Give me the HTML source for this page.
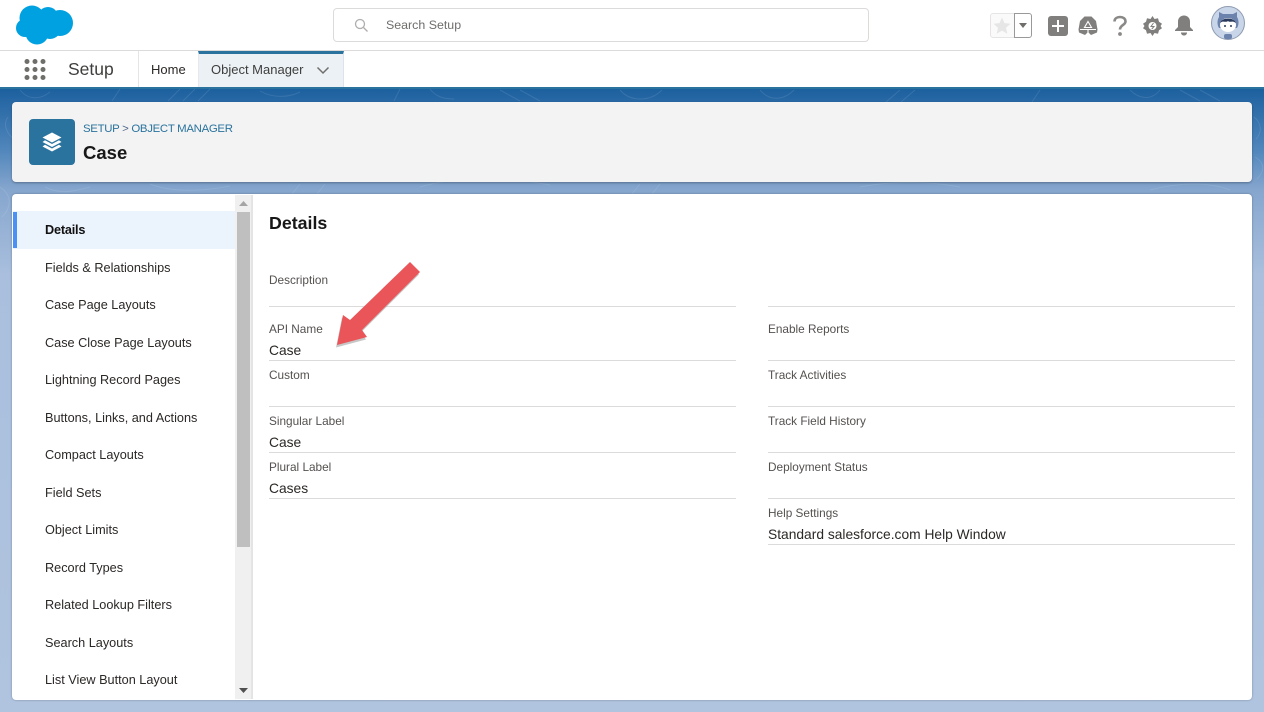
<!DOCTYPE html>
<html><head><meta charset="utf-8"><style>
html,body{margin:0;padding:0;width:1264px;height:712px;overflow:hidden;background:#b0c4df;font-family:"Liberation Sans",sans-serif;color:#181818}
.a{position:absolute;white-space:nowrap}
.nav{font-size:12.7px;left:45px;line-height:16px;color:#2b2826}
.lab{font-size:11.8px;line-height:14px;color:#54514f}
.val{font-size:13.8px;line-height:16px;color:#2b2826}
.ln{position:absolute;height:1px;background:#dddbda;width:467px}
</style></head><body>
<div class="a" style="left:0;top:0;width:1264px;height:50px;background:#fff;border-bottom:1px solid #dddbda"></div>
<svg class="a" style="left:14px;top:3px" width="62" height="44" viewBox="0 0 62 44"><g fill="#00a1e0"><circle cx="18" cy="15" r="12.500"/><circle cx="34" cy="14" r="10"/><circle cx="46" cy="20" r="13"/><circle cx="11" cy="25" r="9"/><circle cx="23" cy="30" r="11.500"/><circle cx="36" cy="25" r="11"/></g></svg>
<div class="a" style="left:333px;top:8px;width:534px;height:32px;background:#fff;border:1px solid #dddbda;border-radius:4px"></div>
<svg class="a" style="left:354px;top:18px" width="15" height="15" viewBox="0 0 15 15" fill="none" stroke="#b0aeac" stroke-width="1.300"><circle cx="6" cy="6" r="4.500"/><path d="M9.500 9.500L13.500 13.500"/></svg>
<div class="a" style="left:386px;top:17px;font-size:12.400px;line-height:17px;color:#6f6e6c">Search Setup</div>
<div class="a" style="left:990px;top:13px;width:24px;height:23px;border:1px solid #e6e5e4;border-radius:3px 0 0 3px;background:#fafafa"></div>
<svg class="a" style="left:993px;top:17px" width="18" height="17" viewBox="0 0 18 17"><path d="M9 0.500l2.500 5.600 6 .6-4.500 4 1.300 6L9 13.600 3.700 16.700l1.300-6-4.500-4 6-.6z" fill="#e6e6e6"/></svg>
<div class="a" style="left:1014px;top:13px;width:16px;height:23px;border:1px solid #9a9997;border-radius:0 3px 3px 0;background:#fff"></div>
<svg class="a" style="left:1019px;top:23px" width="8" height="6"><path d="M0 0h8L4 5z" fill="#706e6b"/></svg>
<svg class="a" style="left:1048px;top:16px" width="20" height="20"><rect width="20" height="20" rx="3" fill="#807f7d"/><path d="M10 4v12M4 10h12" stroke="#fff" stroke-width="2"/></svg>
<svg class="a" style="left:1078px;top:16px" width="20" height="20" viewBox="0 0 20 20"><path d="M6.500 .5h7L18 5l1.500 8.500-.5 3-6 2.500-3-3-3 3-6-2.500-.5-3L2 5z" fill="#807f7d"/><path d="M10 5.500l3.500 6h-7zM2 13.500h16M10 14v3" stroke="#fff" stroke-width="1.100" fill="none"/></svg>
<svg class="a" style="left:1112px;top:15px" width="16" height="22" viewBox="0 0 16 22" fill="none"><path d="M2.500 6.500C2.500 3.500 5 2 8 2s5.500 1.500 5.500 4.500C13.500 10 8 10 8 14.500" stroke="#8a8987" stroke-width="2.600"/><circle cx="8" cy="19" r="1.900" fill="#8a8987"/></svg>
<svg class="a" style="left:1143px;top:16px" width="19" height="20" viewBox="0 0 19 20"><path d="M9.500 0l2 3 3.500-.7 1 3.500 3 2-1.500 2.200 1.500 2.200-3 2-1 3.500-3.500-.7-2 3-2-3-3.500.7-1-3.500-3-2L1.500 10 0 7.800l3-2 1-3.500 3.500.7z" fill="#807f7d"/><circle cx="9.500" cy="10" r="4" fill="#fff"/><path d="M10.500 7L8 10.500h3L8.800 13" stroke="#807f7d" fill="none"/></svg>
<svg class="a" style="left:1174px;top:15px" width="20" height="21" viewBox="0 0 20 21"><path d="M10 0.500c3.500 0 6 2.500 6 6v5.500l3 3v1H1v-1l3-3V6.500c0-3.500 2.500-6 6-6z" fill="#807f7d"/><path d="M7 17.500h6c0 2-1.500 3-3 3s-3-1-3-3z" fill="#807f7d"/></svg>
<svg class="a" style="left:1211px;top:6px" width="34" height="34" viewBox="0 0 34 34"><circle cx="17" cy="17" r="16.500" fill="#c9d5e8" stroke="#8e9bb0"/><path d="M8 11l0-5 4 2h10l4-2 0 5c2 3 2 8 0 11H8c-2-3-2-8 0-11z" fill="#6c83ad"/><ellipse cx="17" cy="19" rx="8" ry="7" fill="#fff"/><path d="M9 17c2-6 14-6 16 0-4-3-6 0-8-2-2 2-5-1-8 2z" fill="#2a3a5e"/><circle cx="14" cy="20" r="1" fill="#2a3a5e"/><circle cx="20" cy="20" r="1" fill="#2a3a5e"/><rect x="13" y="28" width="8" height="5" rx="2" fill="#6c83ad"/></svg>
<div class="a" style="left:0;top:51px;width:1264px;height:36px;background:#fff"></div>
<svg class="a" style="left:24px;top:59px" width="22" height="22" fill="#706e6b"><circle cx="3" cy="2.500" r="2.500"/><circle cx="11" cy="2.500" r="2.500"/><circle cx="19" cy="2.500" r="2.500"/><circle cx="3" cy="10.500" r="2.500"/><circle cx="11" cy="10.500" r="2.500"/><circle cx="19" cy="10.500" r="2.500"/><circle cx="3" cy="18.500" r="2.500"/><circle cx="11" cy="18.500" r="2.500"/><circle cx="19" cy="18.500" r="2.500"/></svg>
<div class="a" style="left:68px;top:58px;font-size:17.500px;line-height:22px;color:#3e3e3c">Setup</div>
<div class="a" style="left:138px;top:51px;width:1px;height:36px;background:#e5e5e5"></div>
<div class="a" style="left:151px;top:61px;font-size:13px;line-height:17px;color:#2b2826">Home</div>
<div class="a" style="left:198px;top:51px;width:146px;height:36px;background:#ecf1f5;box-sizing:border-box;border-top:3px solid #2a739e;border-right:1px solid #dde3e8;border-left:1px solid #e5e8ec"></div>
<div class="a" style="left:211px;top:61px;font-size:13px;line-height:17px;color:#3e3e3c">Object Manager</div>
<svg class="a" style="left:316px;top:66px" width="14" height="9" fill="none"><path d="M1.500 1.500L7 7l5.500-5.500" stroke="#706e6b" stroke-width="1.500"/></svg>
<svg class="a" style="left:0;top:87px" width="1264" height="625" viewBox="0 0 1264 625"><defs><linearGradient id="g" x1="0" y1="0" x2="0" y2="1"><stop offset="0" stop-color="#1b5f9e"/><stop offset=".1" stop-color="#5086bb"/><stop offset=".165" stop-color="#86a6ce"/><stop offset=".3" stop-color="#a9bfdd"/><stop offset="1" stop-color="#b0c4df"/></linearGradient></defs><rect width="1264" height="625" fill="url(#g)"/><rect width="1264" height="2" fill="#2a739e"/><g fill="none" stroke="#fff" stroke-opacity=".1" stroke-width="1"><path d="M20 3c8 10 20 10 30 2M120 2l-8 12M180 2l-12 12M195 2l-12 12M210 2l-12 12M260 4c14 8 30 6 40 1M400 2l-6 12M430 2c6 8 14 10 24 10M500 3l20 11M520 3l20 11M620 3c10 12 30 12 42 0M760 3c10 12 24 10 34 0M900 3l-14 12M915 3l-14 12M1040 3l-8 12M1130 3c10 10 22 10 30 0M1180 3l20 11M1200 3l20 11"/><path d="M0 100c12 8 12 20 2 30M8 30c-6 8 0 18 6 22M1254 30c8 6 8 16 2 22M1255 70c10 6 10 14 2 22"/><path d="M45 100c15 8 30 4 45 0M150 97c20 8 50 8 80 2M300 97l-8 10M325 97l-8 10M420 100c40-12 90-10 130-2M640 97l-8 10M660 97l-8 10M860 100c30-6 70-6 100 0M1150 103c30-8 60-8 80 0"/></g></svg>
<div class="a" style="left:12px;top:102px;width:1240px;height:80px;background:#f3f3f3;border-radius:4px;box-shadow:0 1px 2px rgba(0,0,0,.3)"></div>
<div class="a" style="left:29px;top:119px;width:46px;height:46px;background:#2a739e;border-radius:4px"></div>
<svg class="a" style="left:42px;top:132px" width="20" height="20" viewBox="0 0 20 20" fill="#fff"><path d="M10 .5l9.500 5L10 10.500.5 5.500z"/><path d="M3 8.300L10 12l7-3.700 2.500 1.700L10 15 .5 10z"/><path d="M3 12.800l7 3.700 7-3.700 2.500 1.700L10 19.500.5 14.500z"/></svg>
<div class="a" style="left:83px;top:122px;font-size:11.400px;letter-spacing:-.3px;line-height:15px;color:#2a739e">SETUP <span style="color:#54698d">&gt;</span> OBJECT MANAGER</div>
<div class="a" style="left:83px;top:141px;font-size:18.500px;line-height:24px;font-weight:bold;color:#181818">Case</div>
<div class="a" style="left:12px;top:194px;width:1240px;height:506px;background:#fff;border-radius:4px;box-shadow:0 0 2px rgba(0,0,0,.3)"></div>
<div class="a" style="left:235px;top:195px;width:18px;height:504px;background:#f0f0f0;box-sizing:border-box;border-right:2px solid #e4e4e4"></div>
<div class="a" style="left:237px;top:212px;width:13px;height:335px;background:#bfbfbf"></div>
<svg class="a" style="left:239px;top:201px" width="9" height="6"><path d="M4.500 0L9 5H0z" fill="#a5a5a5"/></svg>
<svg class="a" style="left:239px;top:688px" width="9" height="6"><path d="M0 0h9L4.500 5z" fill="#505050"/></svg>
<div class="a" style="left:13px;top:211px;width:222px;height:38px;background:#ebf3fd"></div>
<div class="a" style="left:13px;top:212px;width:4px;height:36px;background:#4a90f5"></div>
<div class="a nav" style="top:222px;font-weight:bold;color:#111;letter-spacing:-.2px">Details</div>
<div class="a nav" style="top:260px">Fields &amp; Relationships</div>
<div class="a nav" style="top:297px">Case Page Layouts</div>
<div class="a nav" style="top:335px">Case Close Page Layouts</div>
<div class="a nav" style="top:372px">Lightning Record Pages</div>
<div class="a nav" style="top:410px">Buttons, Links, and Actions</div>
<div class="a nav" style="top:447px">Compact Layouts</div>
<div class="a nav" style="top:485px">Field Sets</div>
<div class="a nav" style="top:522px">Object Limits</div>
<div class="a nav" style="top:560px">Record Types</div>
<div class="a nav" style="top:597px">Related Lookup Filters</div>
<div class="a nav" style="top:635px">Search Layouts</div>
<div class="a nav" style="top:672px">List View Button Layout</div>
<div class="a" style="left:269px;top:211px;font-size:17.800px;line-height:24px;font-weight:bold;color:#181818">Details</div>
<div class="a lab" style="left:269px;top:273px">Description</div><div class="ln" style="left:269px;top:306px"></div>
<div class="a lab" style="left:269px;top:322px">API Name</div><div class="a val" style="left:269px;top:343px">Case</div><div class="ln" style="left:269px;top:360px"></div>
<div class="a lab" style="left:269px;top:368px">Custom</div><div class="ln" style="left:269px;top:406px"></div>
<div class="a lab" style="left:269px;top:414px">Singular Label</div><div class="a val" style="left:269px;top:435px">Case</div><div class="ln" style="left:269px;top:452px"></div>
<div class="a lab" style="left:269px;top:460px">Plural Label</div><div class="a val" style="left:269px;top:481px">Cases</div><div class="ln" style="left:269px;top:498px"></div>
<div class="ln" style="left:768px;top:306px"></div>
<div class="a lab" style="left:768px;top:322px">Enable Reports</div><div class="ln" style="left:768px;top:360px"></div>
<div class="a lab" style="left:768px;top:368px">Track Activities</div><div class="ln" style="left:768px;top:406px"></div>
<div class="a lab" style="left:768px;top:414px">Track Field History</div><div class="ln" style="left:768px;top:452px"></div>
<div class="a lab" style="left:768px;top:460px">Deployment Status</div><div class="ln" style="left:768px;top:498px"></div>
<div class="a lab" style="left:768px;top:506px">Help Settings</div><div class="a val" style="left:768px;top:527px">Standard salesforce.com Help Window</div><div class="ln" style="left:768px;top:544px"></div>
<svg class="a" style="left:330px;top:255px" width="100" height="100" viewBox="0 0 100 100"><path d="M80 7L90 17 32 75l5 7L7 90l6-30 7 5z" fill="#999" transform="translate(-1 2.500)" opacity=".55"/><path d="M80 7L90 17 32 75l5 7L7 90l6-30 7 5z" fill="#e95558"/></svg>
</body></html>
